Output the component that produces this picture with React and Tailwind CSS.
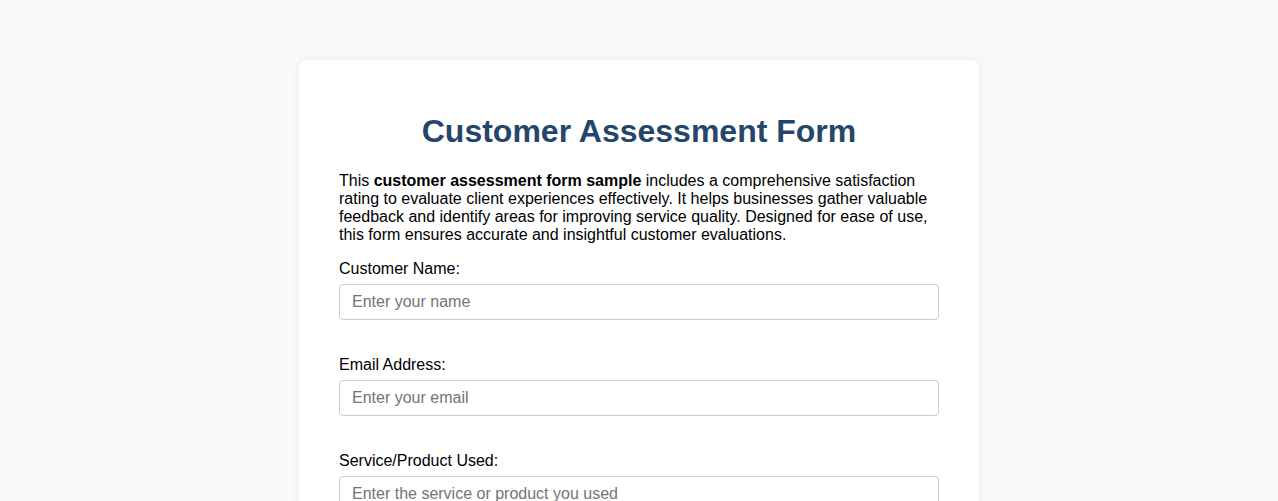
export default function App() {
  const fields = [
    { label: "Customer Name:", placeholder: "Enter your name", type: "text" },
    { label: "Email Address:", placeholder: "Enter your email", type: "email" },
    {
      label: "Service/Product Used:",
      placeholder: "Enter the service or product you used",
      type: "text",
    },
  ];

  return (
    <div
      className="min-h-screen bg-[#f8f9fa] pt-[60px] pb-10"
      style={{ fontFamily: '"Liberation Sans", Arial, sans-serif' }}
    >
      <div className="mx-auto w-[680px] rounded-lg bg-white px-10 pt-8 pb-10 shadow-[0_0_10px_rgba(0,0,0,0.06)]">
        <h1 className="my-[21.44px] text-center text-[32px] leading-[37px] font-bold text-[#25466a]">
          Customer Assessment Form
        </h1>
        <p className="mb-4 text-base leading-[18px] text-black">
          This <strong>customer assessment form sample</strong> includes a
          comprehensive satisfaction rating to evaluate client experiences
          effectively. It helps businesses gather valuable feedback and
          identify areas for improving service quality. Designed for ease of
          use, this form ensures accurate and insightful customer evaluations.
        </p>
        <form>
          {fields.map((f, i) => (
            <div key={i} className="mb-[36px]">
              <label className="mb-[6px] block text-base leading-[18px] text-black">
                {f.label}
              </label>
              <input
                type={f.type}
                placeholder={f.placeholder}
                className="block h-[36px] w-full rounded border border-[#ccc] px-3 text-base text-black placeholder:text-[#757575] outline-none"
              />
            </div>
          ))}
        </form>
      </div>
    </div>
  );
}
